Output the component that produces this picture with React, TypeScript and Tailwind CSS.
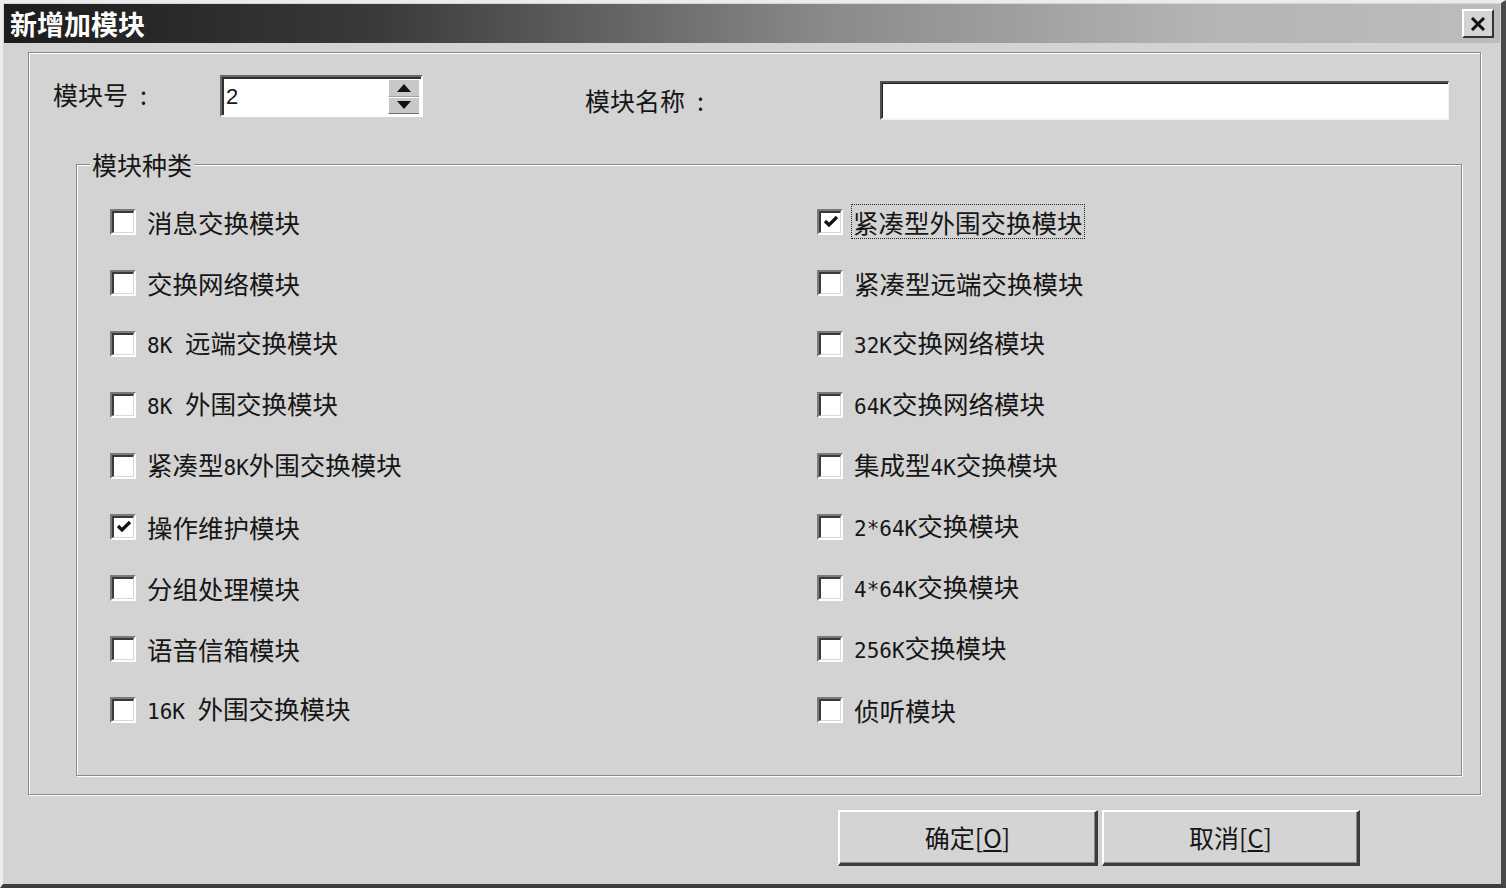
const font = { fontFamily: '"Noto Sans CJK SC", "Liberation Sans", sans-serif' }

const leftItems = [
    { label: '消息交换模块' },
    { label: '交换网络模块' },
    { label: '8K 远端交换模块' },
    { label: '8K 外围交换模块' },
    { label: '紧凑型8K外围交换模块' },
    { label: '操作维护模块', checked: true },
    { label: '分组处理模块' },
    { label: '语音信箱模块' },
    { label: '16K 外围交换模块' },
]

const rightItems = [
    { label: '紧凑型外围交换模块', checked: true, focused: true },
    { label: '紧凑型远端交换模块' },
    { label: '32K交换网络模块' },
    { label: '64K交换网络模块' },
    { label: '集成型4K交换模块' },
    { label: '2*64K交换模块' },
    { label: '4*64K交换模块' },
    { label: '256K交换模块' },
    { label: '侦听模块' },
]

// latin runs are half width in the original font
function Label({ text }: { text: string }) {
    const parts = text.split(/([\x20-\x7E]+)/).filter(Boolean)
    return (
        <>
            {parts.map((p, i) =>
                /^[\x20-\x7E]+$/.test(p) ? (
                    <span key={i} className="font-['DejaVu_Sans_Mono',monospace] text-[21px] whitespace-pre">
                        {p}
                    </span>
                ) : (
                    <span key={i}>{p}</span>
                )
            )}
        </>
    )
}

function CheckBox({ checked }: { checked?: boolean }) {
    return (
        <div className="w-[26px] h-[26px] flex-shrink-0 border-t-2 border-l-2 border-t-[#7a7a7a] border-l-[#7a7a7a] border-b-2 border-r-2 border-b-white border-r-white">
            <div className="w-full h-full bg-white border-t-2 border-l-2 border-t-[#3a3a3a] border-l-[#3a3a3a] border-b border-r border-b-[#d8d8d8] border-r-[#d8d8d8] flex items-center justify-center">
                {checked && (
                    <svg width="16" height="14" viewBox="0 0 16 14">
                        <path d="M2 6 L6 10 L14 2" stroke="#111" strokeWidth="3.2" fill="none" />
                    </svg>
                )}
            </div>
        </div>
    )
}

function Item({ label, checked, focused }: { label: string, checked?: boolean, focused?: boolean }) {
    return (
        <div className="h-[61px] flex items-center gap-[11px]">
            <CheckBox checked={checked} />
            <span
                className={
                    'text-[25.5px] leading-[29px] text-[#161616] whitespace-nowrap ' +
                    (focused ? 'outline-1 outline-dotted outline-[#222] -ml-[2px] px-[1px] py-[2px]' : '')
                }
            >
                <Label text={label} />
            </span>
        </div>
    )
}

function Button({ children, w }: { children: React.ReactNode, w: string }) {
    return (
        <div className={`${w} h-[56px] border-t-2 border-l-2 border-t-white border-l-white border-b-[3px] border-r-[3px] border-b-[#3c3c3c] border-r-[#3c3c3c] bg-[#d4d4d4] flex items-center justify-center shadow-[inset_-1px_-1px_0_#888]`}>
            <span className="text-[25px] text-[#161616]">{children}</span>
        </div>
    )
}

export default function App() {
    return (
        <div style={font} className="w-[1506px] h-[888px] bg-[#d3d3d3] border-t-[3px] border-l-[3px] border-t-[#ececec] border-l-[#ececec] border-r-[5px] border-b-[4px] border-r-[#4a4a4a] border-b-[#3e3e3e] p-[1px] flex flex-col overflow-hidden">
            {/* title bar */}
            <div className="h-[39px] flex items-center justify-between pl-[6px] pr-[6px] bg-[linear-gradient(to_right,#1c1c1c_0%,#3a3a3a_25%,#8a8a8a_55%,#b4b4b4_80%,#bcbcbc_100%)]">
                <span className="text-white font-bold text-[27px] leading-none tracking-[0px]">新增加模块</span>
                <div className="w-[32px] h-[29px] bg-[#d4d4d4] border-t-2 border-l-2 border-t-white border-l-white border-b-2 border-r-2 border-b-[#333] border-r-[#333] flex items-center justify-center">
                    <svg width="16" height="14" viewBox="0 0 16 14">
                        <path d="M2 1 L14 13 M14 1 L2 13" stroke="#111" strokeWidth="3" />
                    </svg>
                </div>
            </div>

            {/* main etched panel */}
            <div className="ml-[24px] mt-[9px] w-[1453px] h-[743px] border border-[#8a8a8a] shadow-[1px_1px_0_#fff,inset_1px_1px_0_#fff] flex flex-col">
                <div className="flex items-start pl-[24px] text-[25px] text-[#161616]">
                    <span className="w-[167px] mt-[26px] leading-[30px]">
                        模块号<span className="ml-[12px]">:</span>
                    </span>
                    <div className="mt-[22px] w-[203px] h-[42px] flex border-t-2 border-l-2 border-t-[#6a6a6a] border-l-[#6a6a6a] border-b-2 border-r-2 border-b-white border-r-white">
                        <div className="flex-1 bg-white border-t-2 border-l-2 border-t-[#303030] border-l-[#303030] flex items-center pl-[2px]">
                            <span className="font-['Liberation_Sans',sans-serif] text-[22px] leading-none">2</span>
                        </div>
                        <div className="w-[33px] bg-white border-t-2 border-t-[#303030] pr-[2px] pb-[1px]">
                            <div className="h-full flex flex-col bg-[#c8c8c8]">
                                <div className="flex-1 flex items-center justify-center border-b border-[#a0a0a0] border-t border-l border-t-white border-l-white">
                                    <svg width="14" height="8" viewBox="0 0 14 8"><path d="M7 0 L14 8 L0 8 Z" fill="#111" /></svg>
                                </div>
                                <div className="flex-1 flex items-center justify-center border-t border-l border-t-white border-l-white border-b border-b-[#707070]">
                                    <svg width="14" height="8" viewBox="0 0 14 8"><path d="M0 0 L14 0 L7 8 Z" fill="#111" /></svg>
                                </div>
                            </div>
                        </div>
                    </div>
                    <span className="ml-[162px] w-[295px] mt-[32px] leading-[30px]">
                        模块名称<span className="ml-[12px]">:</span>
                    </span>
                    <div className="mt-[28px] w-[569px] h-[39px] border-t-2 border-l-2 border-t-[#505050] border-l-[#505050] border-b-2 border-r border-b-[#f4f4f4] border-r-[#f4f4f4]">
                        <div className="w-full h-full bg-white border-t border-l border-t-[#202020] border-l-[#202020]" />
                    </div>
                </div>

                {/* group box */}
                <div className="relative ml-[47px] mt-[44px] w-[1386px] h-[612px] border border-[#8a8a8a] shadow-[1px_1px_0_#fff,inset_1px_1px_0_#fff]">
                    <span className="absolute left-[13px] -top-[16px] bg-[#d3d3d3] px-[2px] text-[25px] leading-[30px] text-[#161616]">模块种类</span>
                    <div className="flex pt-[26px] pl-[33px]">
                        <div className="w-[707px] flex flex-col">
                            {leftItems.map((it) => (
                                <Item key={it.label} {...it} />
                            ))}
                        </div>
                        <div className="flex flex-col">
                            {rightItems.map((it) => (
                                <Item key={it.label} {...it} />
                            ))}
                        </div>
                    </div>
                </div>
            </div>

            {/* buttons */}
            <div className="flex justify-end gap-[4px] mt-[15px] pr-[140px]">
                <Button w="w-[260px]">
                    确定[<span className="underline underline-offset-2">O</span>]
                </Button>
                <Button w="w-[258px]">
                    取消[<span className="underline underline-offset-2">C</span>]
                </Button>
            </div>
        </div>
    )
}
